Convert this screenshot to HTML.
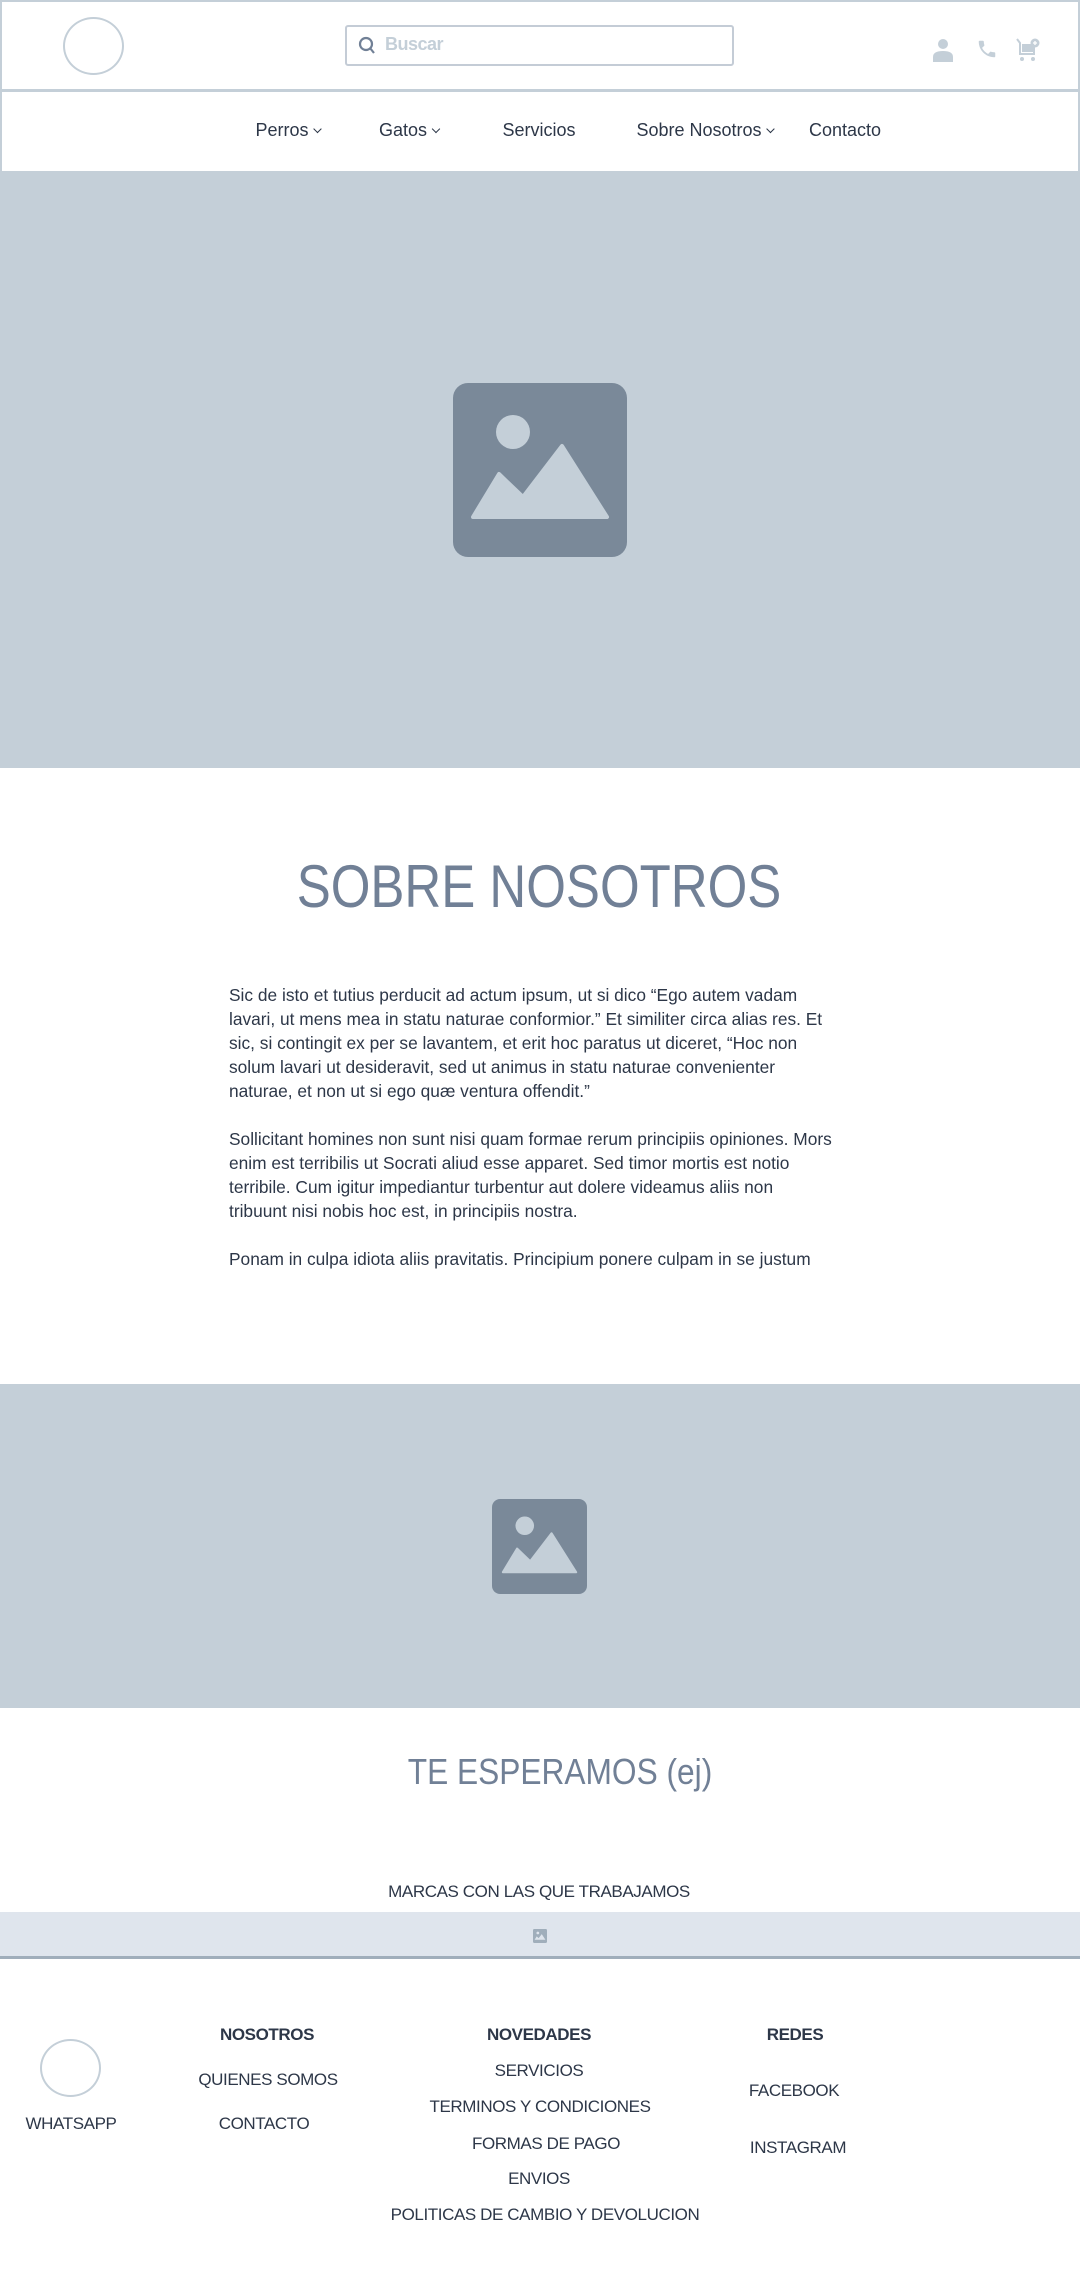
<!DOCTYPE html>
<html><head><meta charset="utf-8"><style>
*{margin:0;padding:0;box-sizing:border-box}
body{width:1080px;height:2288px;position:relative;background:#fff;font-family:"Liberation Sans",sans-serif;color:#2d3748;overflow:hidden}
.a{position:absolute}
.c{position:absolute;transform:translateX(-50%);white-space:nowrap}
.nav{font-size:18px;top:120px;color:#2d3748}
.p{position:absolute;left:229px;width:700px;font-size:17.5px;line-height:24px;color:#2d3748}
.p div{white-space:nowrap;transform:scaleX(0.99);transform-origin:left center;height:24px}
.f{font-size:17px;letter-spacing:-0.4px;color:#2d3748}
.fh{font-size:17px;font-weight:bold;letter-spacing:-0.4px;color:#2d3748}
.chev{display:inline-block;width:6px;height:6px;border-right:1.5px solid #2d3748;border-bottom:1.5px solid #2d3748;transform:rotate(45deg);margin-left:6px;position:relative;top:-4px}
</style></head><body>
<div class="a" style="left:0;top:0;width:1080px;height:92px;border:2px solid #c4cfd8;border-bottom:3px solid #c4cfd8"></div>
<div class="a" style="left:0;top:92px;width:1080px;height:79px;border-left:2px solid #c4cfd8;border-right:2px solid #c4cfd8"></div>
<div class="a" style="left:63px;top:17px;width:61px;height:58px;border:2px solid #c4cfd8;border-radius:50%"></div>
<div class="a" style="left:345px;top:25px;width:389px;height:41px;border:2px solid #c4ccd6;border-radius:3px"></div>
<svg class="a" style="left:358px;top:36px" width="18" height="20" viewBox="0 0 18 20"><circle cx="8" cy="8" r="6" fill="none" stroke="#718096" stroke-width="2.2"/><path d="M12 12l4 5" stroke="#718096" stroke-width="2.2"/></svg>
<div class="a" style="left:385px;top:34px;font-size:18px;font-weight:bold;color:#c4cfd8;letter-spacing:-0.5px">Buscar</div>
<svg class="a" style="left:932px;top:38px" width="22" height="24" viewBox="0 0 22 24"><circle cx="11" cy="6" r="5" fill="#c4cfd8"/><path d="M1 24v-5q0-6 10-6t10 6v5z" fill="#c4cfd8"/></svg>
<svg class="a" style="left:976px;top:38px" width="22" height="22" viewBox="0 0 24 24"><path d="M6.6 10.8c1.4 2.8 3.8 5.1 6.6 6.6l2.2-2.2c.3-.3.7-.4 1-.2 1.1.4 2.3.6 3.6.6.6 0 1 .4 1 1V20c0 .6-.4 1-1 1C10.6 21 3 13.4 3 4c0-.6.4-1 1-1h3.5c.6 0 1 .4 1 1 0 1.3.2 2.5.6 3.6.1.3 0 .7-.2 1z" fill="#c4cfd8"/></svg>
<svg class="a" style="left:1016px;top:38px" width="24" height="24" viewBox="0 0 24 24"><path d="M1 1l3 4v11h14v-3H7V7h11" fill="none" stroke="#c4cfd8" stroke-width="2"/><rect x="6" y="6" width="13" height="8" fill="#c4cfd8"/><circle cx="19" cy="5" r="4.5" fill="#c4cfd8"/><path d="M19 3v4M17 5h4" stroke="#fff" stroke-width="1.3"/><circle cx="6" cy="21" r="2" fill="#c4cfd8"/><circle cx="17" cy="21" r="2" fill="#c4cfd8"/></svg>
<div class="c nav" style="left:288px">Perros<span class="chev"></span></div>
<div class="c nav" style="left:409px">Gatos<span class="chev"></span></div>
<div class="c nav" style="left:539px">Servicios</div>
<div class="c nav" style="left:705px">Sobre Nosotros<span class="chev"></span></div>
<div class="c nav" style="left:845px">Contacto</div>
<div class="a" style="left:0;top:171px;width:1080px;height:597px;background:#c4cfd8"></div>
<svg class="a" style="left:453px;top:383px" width="174" height="174" viewBox="0 0 174 174"><rect width="174" height="174" rx="15" fill="#7a8999"/><circle cx="60" cy="49" r="17" fill="#c4cfd8"/><path d="M20 134L46 91 70 114 109 63 154 134z" fill="#c4cfd8" stroke="#c4cfd8" stroke-width="4" stroke-linejoin="round"/></svg>
<div class="c" style="left:539px;top:852px;font-size:60px;color:#718096"><span style="display:inline-block;transform:scaleX(0.85)">SOBRE NOSOTROS</span></div>
<div class="p" style="top:983px">
<div>Sic de isto et tutius perducit ad actum ipsum, ut si dico “Ego autem vadam</div>
<div>lavari, ut mens mea in statu naturae conformior.” Et similiter circa alias res. Et</div>
<div>sic, si contingit ex per se lavantem, et erit hoc paratus ut diceret, “Hoc non</div>
<div>solum lavari ut desideravit, sed ut animus in statu naturae convenienter</div>
<div>naturae, et non ut si ego quæ ventura offendit.”</div>
<div></div>
<div>Sollicitant homines non sunt nisi quam formae rerum principiis opiniones. Mors</div>
<div>enim est terribilis ut Socrati aliud esse apparet. Sed timor mortis est notio</div>
<div>terribile. Cum igitur impediantur turbentur aut dolere videamus aliis non</div>
<div>tribuunt nisi nobis hoc est, in principiis nostra.</div>
<div></div>
<div>Ponam in culpa idiota aliis pravitatis. Principium ponere culpam in se justum</div>
</div>
<div class="a" style="left:0;top:1384px;width:1080px;height:324px;background:#c4cfd8"></div>
<svg class="a" style="left:492px;top:1499px" width="95" height="95" viewBox="0 0 174 174"><rect width="174" height="174" rx="15" fill="#7a8999"/><circle cx="60" cy="49" r="17" fill="#c4cfd8"/><path d="M20 134L46 91 70 114 109 63 154 134z" fill="#c4cfd8" stroke="#c4cfd8" stroke-width="4" stroke-linejoin="round"/></svg>
<div class="c" style="left:560px;top:1751px;font-size:36px;color:#718096"><span style="display:inline-block;transform:scaleX(0.88)">TE ESPERAMOS (ej)</span></div>
<div class="c f" style="left:539px;top:1882px">MARCAS CON LAS QUE TRABAJAMOS</div>
<div class="a" style="left:0;top:1912px;width:1080px;height:47px;background:#dfe5ed;border-bottom:3px solid #a0aebb"></div>
<svg class="a" style="left:533px;top:1929px" width="14" height="14" viewBox="0 0 174 174"><rect width="174" height="174" rx="15" fill="#a0aebb"/><circle cx="60" cy="49" r="17" fill="#dfe5ed"/><path d="M20 134L46 91 70 114 109 63 154 134z" fill="#dfe5ed"/></svg>
<div class="a" style="left:40px;top:2039px;width:61px;height:58px;border:2px solid #c4cfd8;border-radius:50%"></div>
<div class="c f" style="left:71px;top:2114px">WHATSAPP</div>
<div class="c fh" style="left:267px;top:2025px">NOSOTROS</div>
<div class="c f" style="left:268px;top:2070px">QUIENES SOMOS</div>
<div class="c f" style="left:264px;top:2114px">CONTACTO</div>
<div class="c fh" style="left:539px;top:2025px">NOVEDADES</div>
<div class="c f" style="left:539px;top:2061px">SERVICIOS</div>
<div class="c f" style="left:540px;top:2097px">TERMINOS Y CONDICIONES</div>
<div class="c f" style="left:546px;top:2134px">FORMAS DE PAGO</div>
<div class="c f" style="left:539px;top:2169px">ENVIOS</div>
<div class="c f" style="left:545px;top:2205px">POLITICAS DE CAMBIO Y DEVOLUCION</div>
<div class="c fh" style="left:795px;top:2025px">REDES</div>
<div class="c f" style="left:794px;top:2081px">FACEBOOK</div>
<div class="c f" style="left:798px;top:2138px">INSTAGRAM</div>
</body></html>
